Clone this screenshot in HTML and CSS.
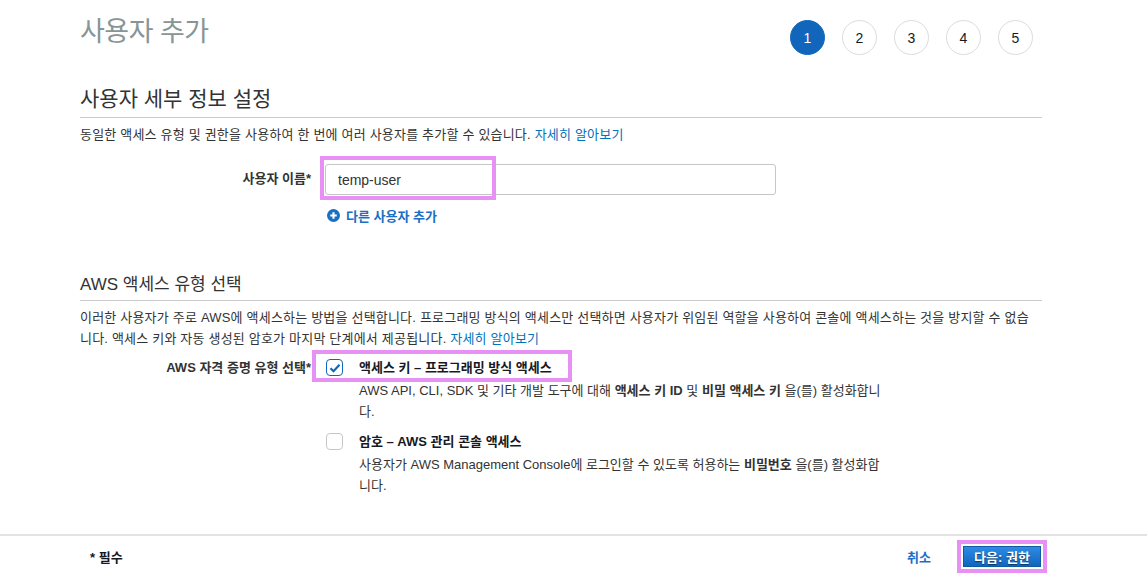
FILE: index.html
```
<!DOCTYPE html>
<html lang="ko">
<head>
    <meta charset="UTF-8">
    <meta name="viewport" content="width=device-width, initial-scale=1.0">
    <title>사용자 추가</title>
    <link rel="stylesheet" href="styles.css">
</head>
<body>
<div class="page">
    <div class="header">
        <h1>사용자 추가</h1>
        <ol class="steps">
            <li class="active">1</li>
            <li>2</li>
            <li>3</li>
            <li>4</li>
            <li>5</li>
        </ol>
    </div>

    <div class="section">
        <h2>사용자 세부 정보 설정</h2>
        <p class="desc">동일한 액세스 유형 및 권한을 사용하여 한 번에 여러 사용자를 추가할 수 있습니다. <a href="#">자세히 알아보기</a></p>
        <div class="form-row">
            <label for="username">사용자 이름*</label>
            <div class="control">
                <div class="field">
                    <input type="text" id="username" value="temp-user">
                    <span class="mark mark-input"></span>
                </div>
                <a href="#" class="add-user">
                    <svg width="13" height="13" viewBox="0 0 16 16"><circle cx="8" cy="8" r="8" fill="#1a6fc4"/><path d="M8 4v8M4 8h8" stroke="#fff" stroke-width="2.6"/></svg>
                    다른 사용자 추가
                </a>
            </div>
        </div>
    </div>

    <div class="section section-access">
        <h2 class="small">AWS 액세스 유형 선택</h2>
        <p class="desc wide">이러한 사용자가 주로 AWS에 액세스하는 방법을 선택합니다. 프로그래밍 방식의 액세스만 선택하면 사용자가 위임된 역할을 사용하여 콘솔에 액세스하는 것을 방지할 수 없습니다. 액세스 키와 자동 생성된 암호가 마지막 단계에서 제공됩니다. <a href="#">자세히 알아보기</a></p>
        <div class="form-row">
            <label>AWS 자격 증명 유형 선택*</label>
            <div class="control">
                <div class="option">
                    <span class="check checked">
                        <svg width="12" height="10" viewBox="0 0 12 10"><path d="M1.5 5.2l3 3 6-6.5" fill="none" stroke="#1166bb" stroke-width="2.2"/></svg>
                    </span>
                    <div class="option-text">
                        <div class="option-title">액세스 키 – 프로그래밍 방식 액세스</div>
                        <div class="option-desc">AWS API, CLI, SDK 및 기타 개발 도구에 대해 <b>액세스 키 ID</b> 및 <b>비밀 액세스 키</b> 을(를) 활성화합니다.</div>
                    </div>
                    <span class="mark mark-option"></span>
                </div>
                <div class="option">
                    <span class="check"></span>
                    <div class="option-text">
                        <div class="option-title">암호 – AWS 관리 콘솔 액세스</div>
                        <div class="option-desc">사용자가 AWS Management Console에 로그인할 수 있도록 허용하는 <b>비밀번호</b> 을(를) 활성화합니다.</div>
                    </div>
                </div>
            </div>
        </div>
    </div>
</div>

<div class="footer">
    <span class="required">* 필수</span>
    <div class="actions">
        <a href="#" class="cancel">취소</a>
        <span class="next-wrap"><button type="button" class="next">다음: 권한</button></span>
    </div>
</div>
</body>
</html>
```
FILE: styles.css
```
body {
    font-family: "Liberation Sans", "Noto Sans CJK KR", sans-serif;
    margin: 0;
    padding: 0;
    color: #16191f;
    background-color: #fff;
}
a {
    color: #0073bb;
    text-decoration: none;
}
.page {
    width: 962px;
    margin-left: 80px;
    height: 534px;
}
.header {
    display: flex;
    justify-content: space-between;
    align-items: flex-start;
    padding-top: 10px;
    padding-right: 9px;
}
h1 {
    margin: 0;
    font-size: 27px;
    font-weight: 400;
    color: #879596;
    letter-spacing: -0.5px;
}
.steps {
    list-style: none;
    margin: 10px 0 0;
    padding: 0;
    display: flex;
    gap: 17px;
}
.steps li {
    width: 33px;
    height: 33px;
    border: 1px solid #dcdcdc;
    border-radius: 50%;
    display: flex;
    align-items: center;
    justify-content: center;
    font-size: 14px;
    color: #16191f;
}
.steps li.active {
    background-color: #1166bb;
    border-color: #1166bb;
    color: #fff;
}
.section {
    margin-top: 27px;
}
h2 {
    margin: 0;
    padding-bottom: 5px;
    font-size: 21px;
    font-weight: 400;
    color: #333;
    border-bottom: 1px solid #ccc;
}
h2.small {
    font-size: 17px;
    padding-bottom: 5px;
}
.desc {
    margin: 8px 0 0;
    font-size: 13px;
    letter-spacing: 0.2px;
    line-height: 18px;
    color: #333;
}
.desc.wide {
    width: 955px;
    line-height: 21px;
    margin-top: 6px;
}
.form-row {
    display: grid;
    grid-template-columns: 231px 1fr;
    column-gap: 14px;
    margin-top: 20px;
}
.form-row label {
    font-size: 13px;
    font-weight: 700;
    color: #333;
    text-align: right;
    line-height: 30px;
}
.field {
    position: relative;
    width: 451px;
}
.field input {
    box-sizing: border-box;
    width: 451px;
    height: 31px;
    padding: 0 12px;
    border: 1px solid #c6c6c6;
    border-radius: 3px;
    font-family: inherit;
    font-size: 14px;
    color: #333;
}
.mark {
    position: absolute;
    border: 4px solid #e891f5;
    pointer-events: none;
}
.mark-input {
    left: -5px;
    top: -8px;
    width: 168px;
    height: 36px;
}
.add-user {
    display: inline-flex;
    align-items: center;
    gap: 6px;
    margin: 11px 0 0 2px;
    font-size: 13px;
    font-weight: 700;
    color: #1a6fc4;
}
.section-access {
    margin-top: 44px;
}
.section-access .form-row {
    margin-top: 9px;
}
.section-access .form-row label {
    line-height: 20px;
}
.option {
    position: relative;
    display: flex;
    align-items: flex-start;
    gap: 16px;
    margin-bottom: 10px;
    width: 560px;
}
.check {
    box-sizing: border-box;
    width: 17px;
    height: 17px;
    margin: 1px 0 0 1px;
    border: 1px solid #c6c6c6;
    border-radius: 4px;
    display: flex;
    align-items: center;
    justify-content: center;
    flex-shrink: 0;
}
.check.checked {
    border: 1.5px solid #1166bb;
}
.option-text {
    width: 545px;
}
.option-title {
    font-size: 13px;
    font-weight: 700;
    color: #16191f;
    line-height: 20px;
}
.option-desc {
    font-size: 13px;
    color: #333;
    line-height: 21px;
    margin-top: 2px;
}
.mark-option {
    left: -13px;
    top: -8px;
    width: 252px;
    height: 24px;
}
.footer {
    border-top: 2px solid #e3e3e3;
    display: flex;
    justify-content: space-between;
    align-items: center;
    height: 40px;
    padding: 0 100px 0 90px;
}
.required {
    font-size: 13px;
    font-weight: 700;
    color: #16191f;
}
.actions {
    display: flex;
    align-items: center;
    gap: 26px;
}
.cancel {
    font-size: 13px;
    font-weight: 700;
    color: #1a6fc4;
}
.next-wrap {
    display: inline-block;
    border: 4px solid #e891f5;
    padding: 2px;
}
.next {
    display: block;
    width: 78px;
    height: 21px;
    border: 1px solid #0e5aa7;
    background: linear-gradient(#2d8ae6, #1166bb);
    color: #fff;
    font-family: inherit;
    font-size: 13px;
    font-weight: 700;
    text-shadow: 0 1px 1px rgba(0, 0, 0, 0.5);
    padding: 0;
}
```
